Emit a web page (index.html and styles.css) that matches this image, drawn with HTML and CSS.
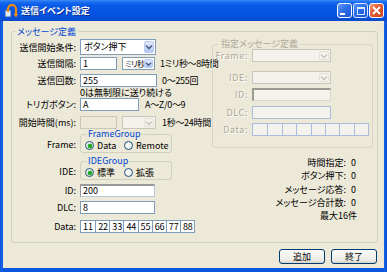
FILE: index.html
```html
<!DOCTYPE html>
<html lang="ja">
<head>
<meta charset="utf-8">
<title>送信イベント設定</title>
<link rel="stylesheet" href="styles.css">
</head>
<body>
<div class="window">
  <div class="titlebar">
    <svg class="appicon" width="14" height="14" viewBox="0 0 14 14">
      <rect x="1" y="6" width="6" height="7" fill="#DDEBFF" stroke="#2A5BB8" stroke-width="1"/>
      <path d="M4 8 V5 A4 4 0 0 1 12 5 V11" fill="none" stroke="#F08A10" stroke-width="2.2"/>
      <path d="M9.5 10 L12 13.5 L14 10 Z" fill="#F08A10"/>
    </svg>
    <span class="title">送信イベント設定</span>
    <div class="capbtns">
      <span class="cap min"><i></i></span>
      <span class="cap max"><i></i></span>
      <span class="cap close">
        <svg width="9" height="9" viewBox="0 0 9 9"><path d="M1 1 L8 8 M8 1 L1 8" stroke="#fff" stroke-width="1.8"/></svg>
      </span>
    </div>
  </div>
  <div class="client">
    <fieldset class="main">
      <legend>メッセージ定義</legend>
      <div class="cols">
        <div class="left">
          <div class="row r1">
            <span class="lbl">送信開始条件:</span>
            <span class="combo w76"><span class="val">ボタン押下</span><span class="drop"><svg width="8" height="6" viewBox="0 0 8 6"><path d="M1 1.5 L4 4.5 L7 1.5" fill="none" stroke="#4D6185" stroke-width="1.6"/></svg></span></span>
          </div>
          <div class="row r2">
            <span class="lbl">送信間隔:</span>
            <span class="edit w37">1</span>
            <span class="combo narrow w33 ml5"><span class="val">ミリ秒</span><span class="drop"><svg width="8" height="6" viewBox="0 0 8 6"><path d="M1 1.5 L4 4.5 L7 1.5" fill="none" stroke="#4D6185" stroke-width="1.6"/></svg></span></span>
            <span class="hint ml5">1ミリ秒～8時間</span>
          </div>
          <div class="row r3">
            <span class="lbl">送信回数:</span>
            <span class="edit w77">255</span>
            <span class="hint ml5">0～255回</span>
          </div>
          <div class="note">0は無制限に送り続ける</div>
          <div class="row r4">
            <span class="lbl">トリガボタン:</span>
            <span class="edit w59">A</span>
            <span class="hint ml6">A～Z/0～9</span>
          </div>
          <div class="row r5">
            <span class="lbl">開始時間(ms):</span>
            <span class="edit dis w37"></span>
            <span class="combo dis w34 ml5"><span class="val"></span><span class="drop"><svg width="8" height="6" viewBox="0 0 8 6"><path d="M1 1.5 L4 4.5 L7 1.5" fill="none" stroke="#C9C7BA" stroke-width="1.6"/></svg></span></span>
            <span class="hint ml6">1秒～24時間</span>
          </div>
          <div class="row grp r6">
            <span class="lbl">Frame:</span>
            <fieldset class="radios">
              <legend>FrameGroup</legend>
              <span class="opt first"><span class="radio on"></span>Data</span>
              <span class="opt"><span class="radio"></span>Remote</span>
            </fieldset>
          </div>
          <div class="row grp r7">
            <span class="lbl">IDE:</span>
            <fieldset class="radios">
              <legend>IDEGroup</legend>
              <span class="opt first"><span class="radio on"></span>標準</span>
              <span class="opt"><span class="radio"></span>拡張</span>
            </fieldset>
          </div>
          <div class="row r8">
            <span class="lbl">ID:</span>
            <span class="edit sunk w75">200</span>
          </div>
          <div class="row r9">
            <span class="lbl">DLC:</span>
            <span class="edit w75">8</span>
          </div>
          <div class="row r10">
            <span class="lbl">Data:</span>
            <span class="cells w115">
              <span>11</span><span>22</span><span>33</span><span>44</span><span>55</span><span>66</span><span>77</span><span>88</span>
            </span>
          </div>
        </div>
        <div class="right">
          <fieldset class="spec">
            <legend>指定メッセージ定義</legend>
            <div class="row s1">
              <span class="slbl">Frame:</span>
              <span class="combo dis2 w79"><span class="val"></span><span class="drop"><svg width="8" height="6" viewBox="0 0 8 6"><path d="M1 1.5 L4 4.5 L7 1.5" fill="none" stroke="#C9C7BA" stroke-width="1.6"/></svg></span></span>
            </div>
            <div class="row s2">
              <span class="slbl">IDE:</span>
              <span class="combo dis2 w79"><span class="val"></span><span class="drop"><svg width="8" height="6" viewBox="0 0 8 6"><path d="M1 1.5 L4 4.5 L7 1.5" fill="none" stroke="#C9C7BA" stroke-width="1.6"/></svg></span></span>
            </div>
            <div class="row s3">
              <span class="slbl">ID:</span>
              <span class="edit sunkdis w79"></span>
            </div>
            <div class="row s4">
              <span class="slbl">DLC:</span>
              <span class="edit dis3 w79"></span>
            </div>
            <div class="row s5">
              <span class="slbl">Data:</span>
              <span class="cells dis3 w117">
                <span></span><span></span><span></span><span></span><span></span><span></span><span></span><span></span>
              </span>
            </div>
          </fieldset>
          <div class="counters">
            <span class="ck">時間指定:</span><span class="cv">0</span>
            <span class="ck">ボタン押下:</span><span class="cv">0</span>
            <span class="ck">メッセージ応答:</span><span class="cv">0</span>
            <span class="ck">メッセージ合計数:</span><span class="cv">0</span>
          </div>
          <div class="maxnote">最大16件</div>
        </div>
      </div>
    </fieldset>
    <div class="actions">
      <button class="btn" type="button">追加</button>
      <button class="btn" type="button">終了</button>
    </div>
  </div>
</div>
</body>
</html>
```

FILE: styles.css
```css
* { box-sizing: border-box; }
html, body { margin: 0; padding: 0; }
body {
  width: 387px;
  height: 272px;
  overflow: hidden;
  background: #ffffff;
  font-family: "Noto Sans CJK JP", "Noto Sans", sans-serif;
  font-size: 9px;
  font-feature-settings: "palt";
  color: #000;
}
.window {
  width: 387px;
  height: 272px;
  display: flex;
  flex-direction: column;
  background: linear-gradient(90deg, #0842C4 0, #1868EE 1px, #0A56E0 3px, #0A56E0 384px, #1868EE 385px, #0842C4 387px);
}

/* title bar */
.titlebar {
  height: 21px;
  flex: none;
  display: flex;
  align-items: center;
  padding: 0 3px 0 4px;
  background: linear-gradient(180deg, #3D8CF5 0, #1A6EF0 2px, #0A5BE8 5px, #0555E5 12px, #0550DC 18px, #0A4AC8 21px);
}
.appicon { flex: none; margin-right: 3px; }
.title {
  color: #fff;
  font-weight: bold;
  font-size: 9px;
  text-shadow: 1px 1px 0 #0A2C8C;
}
.capbtns { margin-left: auto; display: flex; gap: 1px; align-items: center; }
.cap {
  width: 15px;
  height: 15px;
  border: 1px solid #fff;
  border-radius: 3px;
  background: linear-gradient(135deg, #5A9BFF 0, #2D6BEA 50%, #1B55D6 100%);
  display: flex;
  align-items: center;
  justify-content: center;
}
.cap.min i { display: block; width: 5px; height: 2px; background: #fff; margin: 6px 4px 0 0; }
.cap.max { opacity: 0.85; }
.cap.max i { display: block; width: 8px; height: 8px; border: 1px solid #fff; border-top-width: 2px; }
.cap.close { background: linear-gradient(135deg, #F29A76 0, #E25A30 45%, #C8431C 100%); }

/* client area */
.client {
  flex: 1;
  margin: 0 3px 4px;
  background: #ECE9D8;
  display: flex;
  flex-direction: column;
}
fieldset { margin: 0; min-width: 0; }
.main {
  margin: 5px 6px 0 8px;
  padding: 0;
  height: 217px;
  border: 1px solid #D0D0BF;
  border-radius: 3px;
}
.main > legend {
  margin-left: 3px;
  padding: 0 2px;
  line-height: 11px;
  height: 11px;
  color: #0046D5;
}
.cols { display: flex; }
.left { width: 196px; flex: none; }
.right { flex: 1; display: flex; flex-direction: column; }

.row { display: flex; align-items: stretch; }
.row > .lbl, .row > .hint { align-self: center; white-space: nowrap; }
.lbl { width: 64px; margin-right: 4px; text-align: right; flex: none; line-height: 11px; }
.hint { line-height: 11px; letter-spacing: -0.3px; }
.ml5 { margin-left: 5px; }
.ml6 { margin-left: 6px; }

.r1 { margin-top: 2px; height: 16px; }
.r2 { margin-top: 2px; height: 13px; }
.r3 { margin-top: 4px; height: 13px; }
.note { margin-left: 68px; height: 11px; line-height: 11px; white-space: nowrap; }
.r4 { height: 13px; }
.r5 { margin-top: 5px; height: 13px; }
.r6 { height: 24px; }
.r7 { margin-top: 3px; height: 24px; }
.r8 { margin-top: 4px; height: 13px; }
.r9 { margin-top: 4px; height: 13px; }
.r10 { margin-top: 6px; height: 13px; }

.w33 { width: 33px; } .w34 { width: 34px; } .w37 { width: 37px; }
.w59 { width: 59px; } .w75 { width: 75px; } .w76 { width: 76px; }
.w77 { width: 77px; } .w79 { width: 79px; } .w115 { width: 115px; } .w117 { width: 117px; }

/* edits */
.edit {
  flex: none;
  border: 1px solid #7F9DB9;
  background: #fff;
  padding: 0 2px;
  line-height: 11px;
  white-space: nowrap;
  overflow: hidden;
}
.edit.dis { border-color: #C9C7BA; background: #ECE9D8; }
.edit.sunk { border-color: #9A9A9A #B9C9DA #B9C9DA #9A9A9A; border-top-width: 2px; line-height: 10px; }
.edit.sunkdis { border-color: #9C9B92 #D8D6CB #D8D6CB #9C9B92; border-width: 2px 1px 1px 2px; background: #F3F2EC; }
.edit.dis3 { border-color: #A9BCD8; background: #F3F2EC; }

/* combo */
.combo {
  flex: none;
  display: flex;
  border: 1px solid #7F9DB9;
  background: #fff;
  padding: 1px;
}
.combo .val { flex: 1; padding-left: 2px; line-height: 12px; white-space: nowrap; overflow: hidden; }
.combo.narrow .val { font-size: 8px; line-height: 9px; padding-left: 1px; letter-spacing: -0.6px; overflow: visible; min-width: 0; }
.combo .drop {
  width: 10px;
  flex: none;
  border: 1px solid #B9CBF3;
  border-radius: 2px;
  background: linear-gradient(180deg, #E1EAFE 0, #C7D7FB 60%, #B4C8F5 100%);
  display: flex;
  align-items: center;
  justify-content: center;
}
.combo.narrow .drop { width: 9px; }
.combo.dis, .combo.dis2 { border-color: #C9C7BA; background: #F3F2EC; }
.combo.dis .drop, .combo.dis2 .drop { border-color: #E3E1D6; background: #F5F4EE; }

/* radio groups */
.radios {
  width: 92px;
  padding: 0 0 0 4px;
  border: 1px solid #D0D0BF;
  border-radius: 3px;
  display: flex;
  align-items: center;
}
.radios > legend {
  margin-left: 2px;
  padding: 0 1px;
  height: 10px;
  line-height: 10px;
  color: #0046D5;
}
.grp > .lbl { align-self: flex-end; margin-bottom: 3px; }
.opt { display: flex; align-items: center; gap: 3px; line-height: 11px; white-space: nowrap; }
.opt.first { width: 39px; }
.radio {
  width: 9px;
  height: 9px;
  border-radius: 50%;
  border: 1px solid #1C5180;
  background: radial-gradient(circle at 40% 40%, #fff 0, #F0EFE8 60%, #D9D7CC 100%);
  position: relative;
  flex: none;
}
.radio.on::after {
  content: "";
  position: absolute;
  left: 1.5px;
  top: 1.5px;
  width: 4px;
  height: 4px;
  border-radius: 50%;
  background: #21A121;
  box-shadow: 0 0 0 0.5px #5FCB5F;
}

/* data cells */
.cells {
  flex: none;
  display: grid;
  grid-template-columns: repeat(8, 1fr);
  border: 1px solid #7F9DB9;
  background: #fff;
}
.cells > span {
  border-left: 1px solid #7F9DB9;
  padding-left: 2px;
  line-height: 11px;
  overflow: hidden;
  white-space: nowrap;
}
.cells > span:first-child { border-left: 0; }
.cells.dis3 { border-color: #A9BCD8; background: #F3F2EC; }
.cells.dis3 > span { border-left-color: #A9BCD8; }

/* spec group (disabled) */
.spec {
  margin: 2px 4px 0 4px;
  padding: 0 0 11px 0;
  border: 1px solid #D8D6C9;
  border-radius: 3px;
}
.spec > legend {
  margin-left: 6px;
  padding: 0 2px;
  height: 10px;
  line-height: 10px;
  color: #ACA899;
}
.slbl {
  width: 35px;
  margin-right: 4px;
  text-align: right;
  flex: none;
  align-self: center;
  color: #ACA899;
  letter-spacing: 0.6px;
  line-height: 11px;
  text-shadow: 1px 1px 0 #fff;
}
.s1 { height: 13px; }
.s2 { margin-top: 9px; height: 13px; }
.s3 { margin-top: 4px; height: 13px; }
.s4 { margin-top: 5px; height: 13px; }
.s5 { margin-top: 4px; height: 13px; }

.counters {
  margin-top: 8px;
  margin-right: 16px;
  align-self: flex-end;
  display: grid;
  grid-template-columns: auto 10px;
  column-gap: 5px;
  line-height: 13.4px;
}
.ck { text-align: right; white-space: nowrap; }
.maxnote { align-self: flex-end; margin-right: 20px; line-height: 11px; }

/* buttons */
.actions {
  display: flex;
  justify-content: flex-end;
  gap: 6px;
  margin: 6px 7px 0 0;
}
.btn {
  width: 46px;
  height: 15px;
  padding: 0;
  border: 1px solid #003C74;
  border-radius: 3px;
  background: linear-gradient(180deg, #FFFFFF 0, #F4F3EE 40%, #ECEBE6 80%, #D6D0C5 100%);
  font-family: inherit;
  font-size: 9px;
  font-feature-settings: "palt";
  line-height: 11px;
  color: #000;
}
```
